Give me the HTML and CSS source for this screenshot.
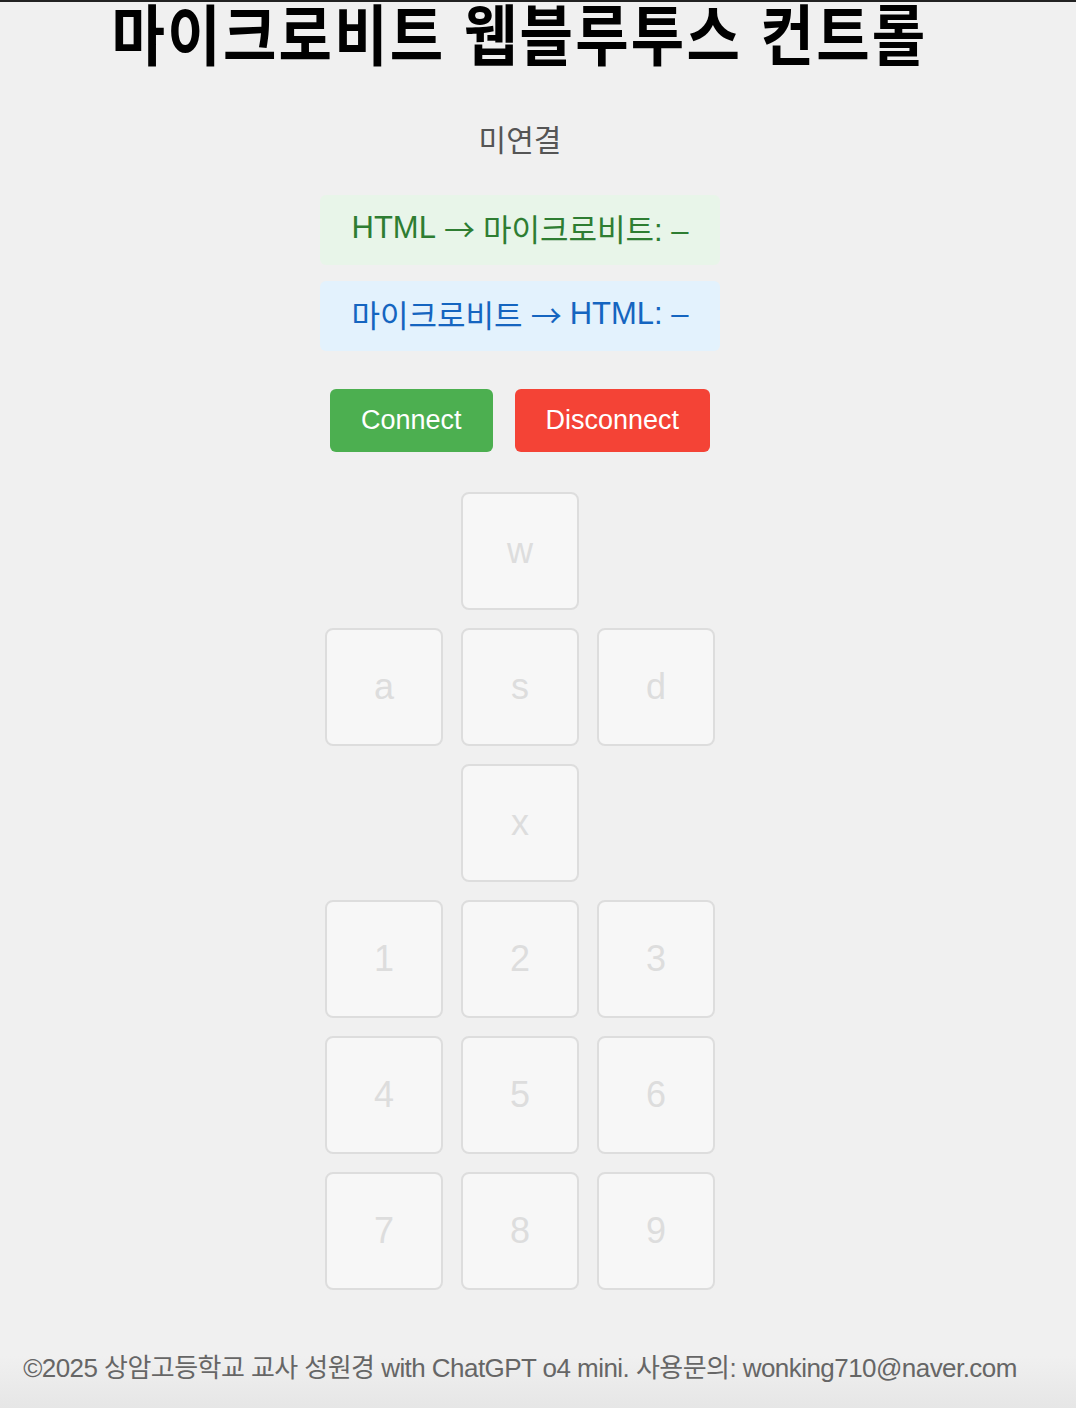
FILE: index.html
```html
<!DOCTYPE html>
<html lang="ko">
<head>
    <meta charset="UTF-8">
    <meta name="viewport" content="width=device-width, initial-scale=1.0">
    <title>마이크로비트 웹블루투스 컨트롤</title>
    <link rel="stylesheet" href="styles.css">
</head>
<body>
    <div class="page">
        <h1>마이크로비트 웹블루투스 컨트롤</h1>
        <div id="status" class="status">미연결</div>

        <div class="log log-send">HTML <span class="arrow">→</span> 마이크로비트: –</div>
        <div class="log log-recv">마이크로비트 <span class="arrow">→</span> HTML: –</div>

        <div class="button-container">
            <button id="connectBtn" class="connect-btn">Connect</button>
            <button id="disconnectBtn" class="disconnect-btn">Disconnect</button>
        </div>

        <div class="keypad">
            <button class="key key-mid" disabled>w</button>
            <button class="key key-first" disabled>a</button>
            <button class="key" disabled>s</button>
            <button class="key" disabled>d</button>
            <button class="key key-mid" disabled>x</button>
            <button class="key key-first" disabled>1</button>
            <button class="key" disabled>2</button>
            <button class="key" disabled>3</button>
            <button class="key" disabled>4</button>
            <button class="key" disabled>5</button>
            <button class="key" disabled>6</button>
            <button class="key" disabled>7</button>
            <button class="key" disabled>8</button>
            <button class="key" disabled>9</button>
        </div>
    </div>

    <footer class="footer">
        ©2025 상암고등학교 교사 성원경 with ChatGPT o4 mini. 사용문의: wonking710@naver.com
    </footer>
</body>
</html>
```

FILE: styles.css
```css
body {
    margin: 0;
    font-family: "Liberation Sans", "Noto Sans CJK KR", sans-serif;
    background-color: #f0f0f0;
    border-top: 2px solid #222;
    min-height: 1406px;
    display: flex;
    flex-direction: column;
}
.page {
    width: 1040px;
    display: flex;
    flex-direction: column;
    align-items: center;
    flex: 1;
}
h1 {
    font-family: "Noto Sans CJK KR", sans-serif;
    font-weight: 700;
    font-size: 66px;
    line-height: 0.9;
    margin: 0;
    color: #000;
    letter-spacing: 2.5px;
    white-space: nowrap;
    transform: scaleX(0.88);
}
.status {
    font-family: "Noto Sans CJK KR", sans-serif;
    font-size: 30px;
    color: #555;
    margin-top: 57px;
    line-height: 40px;
}
.log {
    width: 400px;
    height: 70px;
    box-sizing: border-box;
    padding-bottom: 5px;
    border-radius: 6px;
    display: flex;
    align-items: center;
    justify-content: center;
    gap: 8px;
    font-size: 31px;
    margin-top: 16px;
}
.arrow {
    font-family: "Noto Sans CJK KR", sans-serif;
}
.log-send {
    margin-top: 37px;
    background-color: #e8f5e9;
    color: #2e7d32;
}
.log-recv {
    background-color: #e3f2fd;
    color: #1565c0;
}
.button-container {
    display: flex;
    gap: 22px;
    margin-top: 38px;
}
.button-container button {
    height: 63px;
    padding: 0 31px;
    border: none;
    border-radius: 6px;
    color: white;
    font-family: "Liberation Sans", sans-serif;
    font-size: 27px;
    cursor: pointer;
}
.connect-btn {
    background-color: #4caf50;
}
.disconnect-btn {
    background-color: #f44336;
}
.keypad {
    display: grid;
    grid-template-columns: repeat(3, 118px);
    grid-auto-rows: 118px;
    gap: 18px;
    margin-top: 40px;
}
.key {
    background-color: #f7f7f7;
    border: 2px solid #ddd;
    border-radius: 8px;
    color: #ddd;
    font-family: "Liberation Sans", sans-serif;
    font-size: 36px;
}
.key-mid {
    grid-column: 2;
}
.key-first {
    grid-column: 1;
}
.footer {
    box-sizing: border-box;
    width: 100%;
    padding: 26px 36px 24px 0;
    text-align: center;
    color: #666;
    font-size: 26px;
    letter-spacing: -0.55px;
    background: linear-gradient(#f0f0f0 40%, #e6e6e6);
}
```
